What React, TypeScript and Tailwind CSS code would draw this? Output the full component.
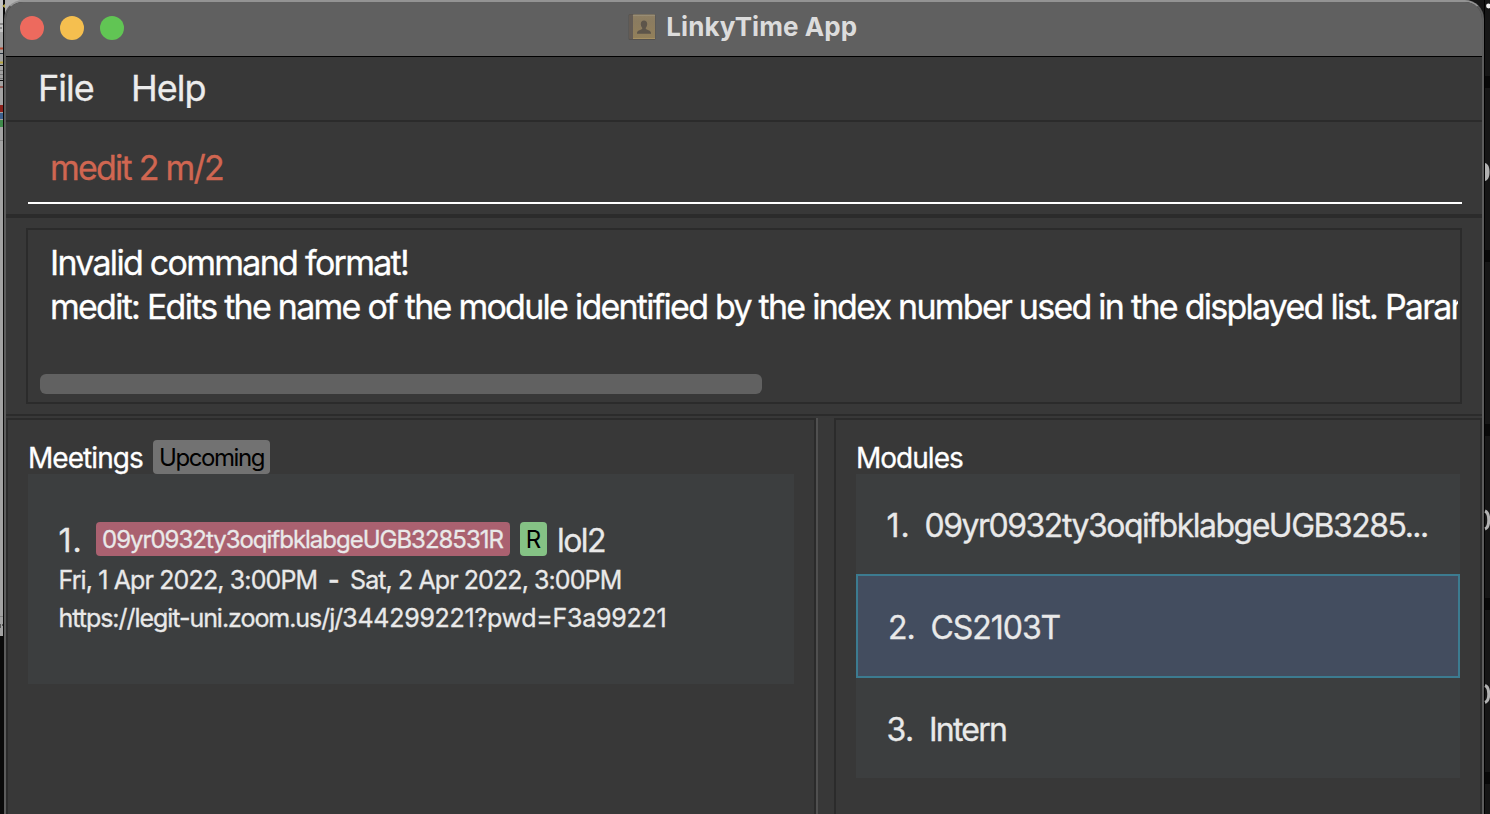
import React from "react";

const modules = [
  { index: "1.", name: "09yr0932ty3oqifbklabgeUGB3285...", row: "h-[100px] pl-[30.5px] pt-[3px]", indexStyle: "w-[38px] tracking-[0.98px]", nameStyle: "tracking-[-1.5px]", selected: false },
  { index: "2.", name: "CS2103T", row: "h-[104px] pl-[30px] pt-[3px]", indexStyle: "w-[42.5px] tracking-[-1px]", nameStyle: "tracking-[-1.05px]", selected: true },
  { index: "3.", name: "Intern", row: "h-[100px] pl-[30.5px] pt-[3px]", indexStyle: "w-[42.5px] tracking-[-0.55px]", nameStyle: "tracking-[-1.77px]", selected: false },
];

function AddressBookIcon() {
  return (
    <svg width="29" height="28" viewBox="0 0 29 28" className="mr-[9.5px] shrink-0">
      <defs>
        <linearGradient id="cover" x1="0" y1="0" x2="0" y2="1">
          <stop offset="0" stopColor="#8f8064" />
          <stop offset="0.3" stopColor="#8b7c60" />
          <stop offset="1" stopColor="#93805a" />
        </linearGradient>
      </defs>
      <rect x="0.5" y="1" width="27" height="26" rx="1.5" fill="#55524f" />
      <rect x="1" y="1.5" width="4.5" height="24.5" rx="1" fill="#645c55" />
      <rect x="5" y="1.5" width="22" height="24.5" rx="0.8" fill="url(#cover)" />
      <path d="M5 2.3H27" stroke="#9c9078" strokeWidth="1" />
      <path d="M5 25.5H27" stroke="#a69062" strokeWidth="1" />
      <path d="M16 7.6c-2 0-3.2 1.5-3.2 3.5 0 1.4.5 2.8 1.4 3.6v1.4c-1.4 1-5.2 1.3-5.2 4.1v.6h14v-.6c0-2.8-3.800-3.100-5.200-4.100v-1.400c.9-.8 1.400-2.200 1.400-3.600 0-2-1.200-3.500-3.200-3.500z" fill="#5d554a" />
    </svg>
  );
}

function LeftDesktop() {
  return (
    <svg width="5" height="814" viewBox="0 0 5 814" className="block shrink-0">
      <rect width="5" height="814" fill="#0a0a0a" />
      <rect width="3" height="636" fill="#a3a3a3" />
      <rect width="3" height="32" fill="#c4c4c4" />
      <path d="M2 6l3-2v4z" fill="#b7a74b" />
      <path d="M0 24h3M0 28h2" stroke="#555" />
      <path d="M0 48.500h3" stroke="#b4472f" strokeWidth="2" />
      <path d="M0 53.500h3" stroke="#25303c" />
      <path d="M0 62.500h3" stroke="#b5a43e" strokeWidth="2" />
      <path d="M0 65.500h3M0 80.500h3" stroke="#111" />
      <path d="M0 70.500h3M0 74.500h3M0 78.500h3" stroke="#777" />
      <path d="M0 87h3" stroke="#8c3f37" strokeWidth="1.500" />
      <path d="M0 105h3v7H0z" fill="#8c211b" />
      <path d="M0 113h3v6H0z" fill="#3e618e" />
      <path d="M0 120h3v7H0z" fill="#3f8a4b" />
      <path d="M0 140.500h3M0 616.500h3" stroke="#848484" />
      <path d="M0 624h1v4H0zM2 624h1v2H2z" fill="#555" />
    </svg>
  );
}

function RightDesktop() {
  return (
    <svg width="6" height="814" viewBox="0 0 6 814" className="block shrink-0">
      <rect width="6" height="814" fill="#161616" />
      <path d="M0 0h1v814H0z" fill="#000" />
      <path d="M1 76h5v12H1zM1 250h5v12H1zM1 424h5v12H1zM1 598h5v12H1zM1 772h5v12H1z" fill="#080808" />
      <circle cx="4.500" cy="6" r="2.400" fill="#f2f2f2" />
      <path d="M1 163c4 1 4.500 6 4.500 9s-.5 8-4.500 9z" fill="#b2b2b2" />
      <g fill="none" stroke="#b2b2b2" strokeWidth="3">
        <path d="M1 511c5 2 5 16 0 18" />
        <path d="M1 685.500c5 2 5 15 0 17" />
      </g>
    </svg>
  );
}

export default function App() {
  return (
    <div className="flex h-[814px] w-[1490px] overflow-hidden bg-[#151515] font-['Inter',sans-serif] text-[#e9e9e9] [-webkit-text-stroke:0.3px]">
      <LeftDesktop />
      <div className="flex w-[1479px] shrink-0 bg-[linear-gradient(to_right,#b0b0b0_50%,#151515_50%)]">
        <main className="-ml-px flex w-[1480px] shrink-0 flex-col overflow-hidden rounded-t-[19px] border-x-2 border-t-2 border-x-[#5c5c5c] border-t-[#939393] bg-[#383838] whitespace-nowrap">
          <header className="grid h-[54px] shrink-0 grid-cols-[1fr_auto_1fr] bg-[#606060]">
            <div className="flex gap-4 pt-[14px] pl-[14px]">
              <span className="size-6 rounded-full bg-[#ed6a5e]" />
              <span className="size-6 rounded-full bg-[#f5bf4f]" />
              <span className="size-6 rounded-full bg-[#61c554]" />
            </div>
            <div className="mr-[3px] flex h-[49px] items-center text-[26px] font-bold tracking-[0.077px] text-[#dcdcdc] [-webkit-text-stroke:0]">
              <AddressBookIcon />
              <h1>LinkyTime App</h1>
            </div>
          </header>

          <nav className="flex h-[66px] shrink-0 items-start border-t border-b-2 border-t-black border-b-[#2b2b2b] pt-[11px] pl-8 text-[36px] leading-10 text-[#ececec]">
            <span className="w-[93px] tracking-[-1px]">File</span>
            <span className="tracking-[-0.99px]">Help</span>
          </nav>

          <section className="flex h-[96px] shrink-0 flex-col border-b-4 border-[#2b2b2b] px-[22px] pr-5">
            <div className="h-[82px] border-b-2 border-white pt-[26px] pl-[22px] text-[34px] leading-10 tracking-[-1.768px] text-[#d06651]">
              medit 2 m/2
            </div>
          </section>

          <section className="h-[198px] shrink-0 border-b-2 border-[#2b2b2b] pt-[10px] pr-5 pl-5">
            <div className="flex h-[176px] flex-col border-2 border-[#2b2b2b] pr-[2px]">
              <div className="h-[144px] overflow-hidden pt-[11px] pl-[22px] text-[34px] leading-[44px] text-white">
                <p className="tracking-[-1.72px]">Invalid command format!</p>
                <p className="tracking-[-1.746px]">
                  medit: Edits the name of the module identified by the index number used in the displayed list. Param
                </p>
              </div>
              <div className="ml-3 h-5 w-[722px] rounded-[6px] bg-[#616161]" />
            </div>
          </section>

          <div className="flex h-[398px] shrink-0 pt-[2px]">
            <section className="w-[810px] border-2 border-b-0 border-[#2b2b2b] pt-5 pl-5">
              <div className="flex h-[34px]">
                <h2 className="w-[125px] text-[28px] leading-9 tracking-[-0.943px] text-white">Meetings</h2>
                <span className="h-[34px] w-[117px] rounded-[4px] bg-[#727272] pl-[6px] text-[24px] leading-[35px] tracking-[-1.42px] text-black [-webkit-text-stroke:0]">
                  Upcoming
                </span>
              </div>
              <article className="h-[210px] w-[766px] bg-[#3c3e3f] pt-12 pl-[30.500px]">
                <div className="flex h-[34px] text-[32px] leading-[37px]">
                  <span className="w-[37.500px] tracking-[0.98px]">1.</span>
                  <span className="mr-[10px] h-[34px] w-[414px] rounded-[4px] bg-[#aa6170] pl-[6px] text-[24px] leading-[35px] tracking-[-1.015px]">
                    09yr0932ty3oqifbklabgeUGB328531R
                  </span>
                  <span className="mr-[10px] h-[34px] w-[27px] rounded-[4px] bg-[#85c285] text-center text-[24px] leading-[35px] text-black [-webkit-text-stroke:0]">
                    R
                  </span>
                  <span className="tracking-[-1.563px]">lol2</span>
                </div>
                <p className="flex pt-[5px] text-[25px] leading-[38px]">
                  <span className="w-[269.500px] tracking-[-0.87px]">Fri, 1 Apr 2022, 3:00PM</span>
                  <span className="w-[22px] font-semibold">-</span>
                  <span className="tracking-[-0.91px]">Sat, 2 Apr 2022, 3:00PM</span>
                </p>
                <p className="text-[25px] leading-[38px]">
                  <span className="tracking-[-1.04px]">https://legit-uni.zoom.us/j/</span>
                  <span className="tracking-[-0.27px]">344299221?pwd=F3a99221</span>
                </p>
              </article>
            </section>
            <div className="mr-4 w-[2px] bg-[#505050]" />
            <section className="w-[648px] border-2 border-b-0 border-[#2b2b2b] pt-5 pl-5">
              <h2 className="h-[34px] text-[28px] leading-9 tracking-[-0.981px] text-white">Modules</h2>
              <ul className="h-[304px] w-[604px] bg-[#3c3e3f] text-[32px]">
                {modules.map((m) => (
                  <li
                    key={m.index}
                    className={`flex items-center ${m.row} ${m.selected ? "border-2 border-[#3c7b90] bg-[#434d5f]" : ""}`}
                  >
                    <span className={m.indexStyle}>{m.index}</span>
                    <span className={m.nameStyle}>{m.name}</span>
                  </li>
                ))}
              </ul>
            </section>
          </div>
        </main>
      </div>
      <RightDesktop />
    </div>
  );
}
